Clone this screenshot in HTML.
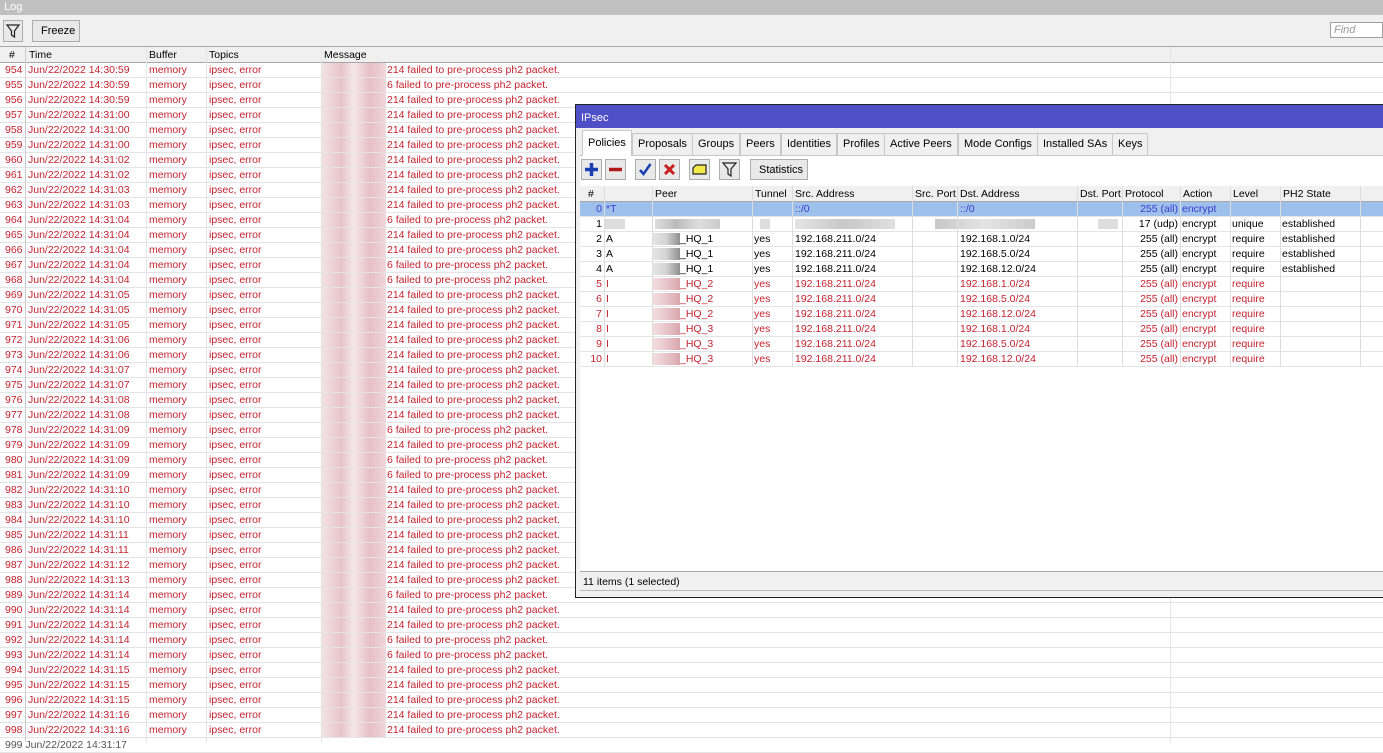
<!DOCTYPE html>
<html><head><meta charset="utf-8">
<style>
*{box-sizing:border-box;margin:0;padding:0}
body{width:1383px;height:742px;overflow:hidden;background:#fff;font-family:"Liberation Sans",sans-serif;font-size:10.5px;position:relative;color:#000}
.a{position:absolute;white-space:nowrap}
.btn{position:absolute;border:1px solid #adadad;background:#e9e9e9}
.row{position:absolute;left:0;width:1383px;height:15px;border-bottom:1px solid #e4e4e4}
.row span{position:absolute;top:1px;white-space:nowrap}
.red{color:#c4222e}
.vl{position:absolute;width:1px;background:#e4e4e4}
.tab{position:absolute;top:133px;height:22px;border:1px solid #c8c8c8;border-bottom:none;background:#f0f0f0;padding:4px 5px 0 5px;font-size:11px}
.pr span{position:absolute;top:1px;white-space:nowrap}
</style></head><body>
<div class="a" style="left:0;top:0;width:1383px;height:15px;background:#c0c0c0;color:#fff;padding:1px 0 0 4px;font-size:11px">Log</div>
<div class="a" style="left:0;top:15px;width:1383px;height:31px;background:#f0f0f0"></div>
<div class="btn" style="left:3px;top:20px;width:20px;height:22px"><svg width="18" height="20" viewBox="0 0 18 20"><path d="M3 4h12l-4.5 6v6l-3 -2v-4z" fill="none" stroke="#222" stroke-width="1.2"/></svg></div>
<div class="btn" style="left:32px;top:20px;width:48px;height:22px;padding:4px 0 0 8px;font-size:11px">Freeze</div>
<div class="a" style="left:1330px;top:22px;width:53px;height:16px;border:1px solid #a0a0a0;background:#fff;color:#999;font-style:italic;padding:1px 3px;font-size:11px">Find</div>
<div class="a" style="left:0;top:46px;width:1383px;height:17px;background:#f0f0f0;border-top:1px solid #a8a8a8;border-bottom:1px solid #a8a8a8"></div>
<div class="a" style="left:9px;top:49px">#</div>
<div class="a" style="left:29px;top:49px">Time</div>
<div class="a" style="left:149px;top:49px">Buffer</div>
<div class="a" style="left:209px;top:49px">Topics</div>
<div class="a" style="left:324px;top:49px">Message</div>
<div id="log"></div>
<div class="vl" style="left:25px;top:47px;height:695px;background:#ccc"></div>
<div class="vl" style="left:146px;top:47px;height:695px"></div>
<div class="vl" style="left:206px;top:47px;height:695px"></div>
<div class="vl" style="left:321px;top:47px;height:695px"></div>
<div class="vl" style="left:1170px;top:47px;height:695px"></div>

<div class="a" style="left:575px;top:104px;width:808px;height:494px;background:#f0f0f0;border:1px solid #222;border-right:none"></div>
<div class="a" style="left:576px;top:105px;width:807px;height:23px;background:#4f4fc8;color:#fff;padding:7px 0 0 5px;font-size:11px">IPsec</div>
<div class="a" style="left:580px;top:155px;width:803px;height:1px;background:#c8c8c8"></div>
<div class="tab" style="left:582px;top:130px;height:26px;background:#fff;padding-top:6px">Policies</div>
<div class="tab" style="left:632px">Proposals</div>
<div class="tab" style="left:692px">Groups</div>
<div class="tab" style="left:740px">Peers</div>
<div class="tab" style="left:781px">Identities</div>
<div class="tab" style="left:837px">Profiles</div>
<div class="tab" style="left:884px">Active Peers</div>
<div class="tab" style="left:958px">Mode Configs</div>
<div class="tab" style="left:1037px">Installed SAs</div>
<div class="tab" style="left:1112px">Keys</div>
<div class="a" style="left:580px;top:156px;width:803px;height:30px;background:#fff"></div>
<div class="btn" style="left:581px;top:159px;width:21px;height:21px"><svg width="19" height="19"><path d="M9.5 3v13M3 9.5h13" stroke="#1b3fb3" stroke-width="3.5"/></svg></div>
<div class="btn" style="left:605px;top:159px;width:21px;height:21px"><svg width="19" height="19"><path d="M3 9.5h13" stroke="#b01a1a" stroke-width="3.5"/></svg></div>
<div class="btn" style="left:635px;top:159px;width:21px;height:21px"><svg width="19" height="19"><path d="M4 10l3.5 4 7-10" stroke="#1b3fb3" stroke-width="2.5" fill="none"/></svg></div>
<div class="btn" style="left:659px;top:159px;width:21px;height:21px"><svg width="19" height="19"><path d="M5 5l9 9M14 5l-9 9" stroke="#c81e1e" stroke-width="3"/></svg></div>
<div class="btn" style="left:689px;top:159px;width:21px;height:21px"><svg width="19" height="19"><path d="M3 8l3-3h10v9H3z" fill="#f4e94a" stroke="#222" stroke-width="1.2"/></svg></div>
<div class="btn" style="left:719px;top:159px;width:21px;height:21px"><svg width="19" height="19"><path d="M3 3h13l-5 6v7l-3-2V9z" fill="none" stroke="#222" stroke-width="1.2"/></svg></div>
<div class="btn" style="left:750px;top:159px;width:58px;height:21px;padding:4px 0 0 8px;font-size:11px">Statistics</div>
<div class="a" style="left:580px;top:186px;width:803px;height:385px;background:#fff;border-top:1px solid #a8a8a8"></div>
<div class="a" style="left:580px;top:186px;width:803px;height:16px;background:#f0f0f0;border-bottom:1px solid #a8a8a8"></div>
<div class="a" style="left:588px;top:188px">#</div>
<div class="a" style="left:655px;top:188px">Peer</div>
<div class="a" style="left:755px;top:188px">Tunnel</div>
<div class="a" style="left:795px;top:188px">Src. Address</div>
<div class="a" style="left:915px;top:188px">Src. Port</div>
<div class="a" style="left:960px;top:188px">Dst. Address</div>
<div class="a" style="left:1080px;top:188px">Dst. Port</div>
<div class="a" style="left:1125px;top:188px">Protocol</div>
<div class="a" style="left:1183px;top:188px">Action</div>
<div class="a" style="left:1233px;top:188px">Level</div>
<div class="a" style="left:1283px;top:188px">PH2 State</div>
<div id="pol"></div>
<div class="a" style="left:580px;top:571px;width:803px;height:1px;background:#a8a8a8"></div>
<div class="a" style="left:583px;top:576px;font-size:10.5px">11 items (1 selected)</div>
<div class="a" style="left:580px;top:590px;width:803px;height:1px;background:#bbb"></div>

<script>
var L=[["954","14:30:59",1],["955","14:30:59",0],["956","14:30:59",1],["957","14:31:00",1],["958","14:31:00",1],["959","14:31:00",1],["960","14:31:02",1],["961","14:31:02",1],["962","14:31:03",1],["963","14:31:03",1],["964","14:31:04",0],["965","14:31:04",1],["966","14:31:04",1],["967","14:31:04",0],["968","14:31:04",0],["969","14:31:05",1],["970","14:31:05",1],["971","14:31:05",1],["972","14:31:06",1],["973","14:31:06",1],["974","14:31:07",1],["975","14:31:07",1],["976","14:31:08",1],["977","14:31:08",1],["978","14:31:09",0],["979","14:31:09",1],["980","14:31:09",0],["981","14:31:09",0],["982","14:31:10",1],["983","14:31:10",1],["984","14:31:10",1],["985","14:31:11",1],["986","14:31:11",1],["987","14:31:12",1],["988","14:31:13",1],["989","14:31:14",0],["990","14:31:14",1],["991","14:31:14",1],["992","14:31:14",0],["993","14:31:14",0],["994","14:31:15",1],["995","14:31:15",1],["996","14:31:15",1],["997","14:31:16",1],["998","14:31:16",1]];
var h="";
L.forEach(function(r,i){var y=63+i*15;
h+='<div class="row red" style="top:'+y+'px"><span style="left:5px">'+r[0]+'</span><span style="left:28px">Jun/22/2022 '+r[1]+'</span><span style="left:149px">memory</span><span style="left:209px">ipsec, error</span>'+
'<span style="left:322px;top:0;width:64px;height:14px;background:linear-gradient(90deg,#f3e3e5,#e8c4c9 30%,#f5e6e8 50%,#e6bfc5 75%,#f0d8db)"></span>'+
'<span style="left:387px">'+(r[2]?'214':'6')+' failed to pre-process ph2 packet.</span></div>';});
h+='<div class="row" style="top:738px;color:#555"><span style="left:5px">999 Jun/22/2022 14:31:17</span></div>';
document.getElementById('log').innerHTML=h;
var P=[["0","*T","","","::/0","::/0","255 (all)","encrypt","",""],
["1","","","","","","17 (udp)","encrypt","unique","established"],
["2","A","_HQ_1","yes","192.168.211.0/24","192.168.1.0/24","255 (all)","encrypt","require","established"],
["3","A","_HQ_1","yes","192.168.211.0/24","192.168.5.0/24","255 (all)","encrypt","require","established"],
["4","A","_HQ_1","yes","192.168.211.0/24","192.168.12.0/24","255 (all)","encrypt","require","established"],
["5","I","_HQ_2","yes","192.168.211.0/24","192.168.1.0/24","255 (all)","encrypt","require",""],
["6","I","_HQ_2","yes","192.168.211.0/24","192.168.5.0/24","255 (all)","encrypt","require",""],
["7","I","_HQ_2","yes","192.168.211.0/24","192.168.12.0/24","255 (all)","encrypt","require",""],
["8","I","_HQ_3","yes","192.168.211.0/24","192.168.1.0/24","255 (all)","encrypt","require",""],
["9","I","_HQ_3","yes","192.168.211.0/24","192.168.5.0/24","255 (all)","encrypt","require",""],
["10","I","_HQ_3","yes","192.168.211.0/24","192.168.12.0/24","255 (all)","encrypt","require",""]];
var g="";
P.forEach(function(r,i){var y=202+i*15;var c=i==0?"#3a3ad0":(i>=5?"#c4222e":"#000");
var bg=i==0?"background:#9dc1ea;":"";
var blur=i>0?'<span style="left:72px;top:1px;width:28px;height:12px;background:linear-gradient(90deg,'+(i>=5?'#f3dfe2,#e8c6cb,#d9a7ae':'#e6e6e6,#d4d4d4,#8f8f8f')+')"></span>':'';
if(i==1)blur='<span style="left:25px;top:2px;width:20px;height:10px;background:#ddd"></span><span style="left:75px;top:2px;width:65px;height:10px;background:linear-gradient(90deg,#ddd,#bbb,#ddd,#ccc)"></span><span style="left:180px;top:2px;width:10px;height:10px;background:#ddd"></span><span style="left:215px;top:2px;width:100px;height:10px;background:linear-gradient(90deg,#e4e4e4,#c8c8c8,#e0e0e0)"></span><span style="left:355px;top:2px;width:100px;height:10px;background:linear-gradient(90deg,#c8c8c8,#e4e4e4,#ccc)"></span><span style="left:518px;top:2px;width:20px;height:10px;background:#ddd"></span>';
g+='<div class="pr" style="position:absolute;left:580px;top:'+y+'px;width:803px;height:15px;border-bottom:1px solid #e4e4e4;color:'+c+';'+bg+'">'+blur+
'<span style="right:781px">'+r[0]+'</span><span style="left:26px">'+r[1]+'</span><span style="left:100px">'+r[2]+'</span><span style="left:174px">'+r[3]+'</span><span style="left:215px">'+r[4]+'</span><span style="left:380px">'+r[5]+'</span><span style="left:542px;width:56px;text-align:right">'+r[6]+'</span><span style="left:602px">'+r[7]+'</span><span style="left:652px">'+r[8]+'</span><span style="left:702px">'+r[9]+'</span></div>';});
document.getElementById('pol').innerHTML=g;
var xs=[604,652,752,792,912,957,1077,1122,1180,1230,1280,1360];
var v="";xs.forEach(function(x){v+='<div class="vl" style="left:'+x+'px;top:186px;height:181px;background:#ddd"></div>';});
document.getElementById('pol').innerHTML+=v;
</script>
</body></html>
